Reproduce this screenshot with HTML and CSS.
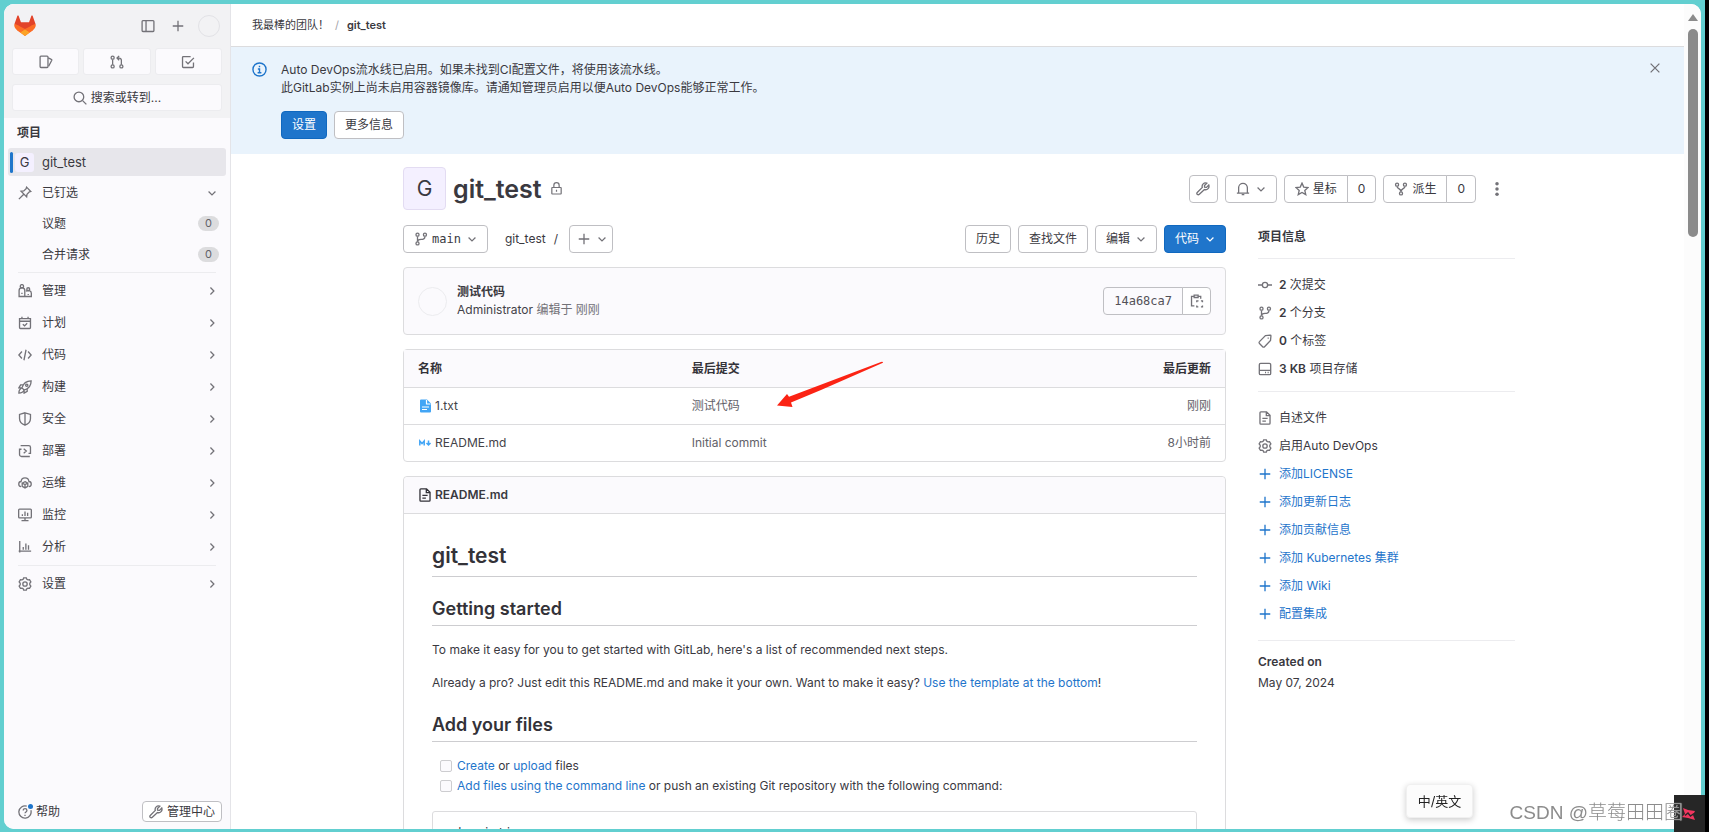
FILE: index.html
```html
<!DOCTYPE html>
<html lang="zh-CN">
<head>
<meta charset="utf-8">
<title>git_test</title>
<link rel="stylesheet" href="styles.css">
</head>
<body>
<svg class="sprite" aria-hidden="true">
  <symbol id="panel" viewBox="0 0 16 16"><rect x="1.25" y="1.75" width="13.5" height="12.5" rx="1"/><path d="M5.75 2v12"/></symbol>
  <symbol id="plus" viewBox="0 0 16 16"><path d="M8 2v12M2 8h12"/></symbol>
  <symbol id="issues" viewBox="0 0 16 16"><rect x="1.25" y="1.25" width="9" height="13" rx="1"/><path d="M10.5 3.2l3.6 1.7c.5.2.7.7.5 1.2L11 12.8"/></symbol>
  <symbol id="merge" viewBox="0 0 16 16"><circle cx="3" cy="3" r="1.75"/><circle cx="3" cy="13" r="1.75"/><circle cx="13" cy="13" r="1.75"/><path d="M3 5v6M13 11V6a2.500 2.500 0 0 0-2.500-2.500H8.500M10.500 1l-2.500 2.500 2.500 2.500"/></symbol>
  <symbol id="todo" viewBox="0 0 16 16"><path d="M11 1.750H2.750a1 1 0 0 0-1 1v10.500a1 1 0 0 0 1 1h10.500a1 1 0 0 0 1-1V8.500M5.250 7.250L8 10l6.750-6.750"/></symbol>
  <symbol id="search" viewBox="0 0 16 16"><circle cx="6.750" cy="6.750" r="5.500"/><path d="M11 11l4.250 4.250"/></symbol>
  <symbol id="pin" viewBox="0 0 16 16"><path d="M9.800 1.300l4.900 4.900-1.700.500-2.700 2.700-.400 3.100L3.500 6.100l3.100-.400 2.700-2.700zM6.300 9.700L1 15"/></symbol>
  <symbol id="down" viewBox="0 0 16 16"><path d="M2.500 5.500L8 11l5.500-5.500"/></symbol>
  <symbol id="right" viewBox="0 0 16 16"><path d="M5.500 2.500L11 8l-5.500 5.500"/></symbol>
  <symbol id="users" viewBox="0 0 16 16"><circle cx="4.500" cy="2.600" r="1.900"/><circle cx="11.700" cy="6" r="1.700"/><path d="M1.250 14.250V7.500a3.250 3.250 0 0 1 6.500 0v6.750zM4.500 10v1.500M8 14.250h7.250V10.500c0-3.400-4.500-3.800-6-2M11.700 11.500v1"/></symbol>
  <symbol id="plan" viewBox="0 0 16 16"><path d="M1.750 3h12.500v10.250a1 1 0 0 1-1 1H2.750a1 1 0 0 1-1-1zM1.750 6h12.500M4.500.750V3M11.500.750V3M5.500 9.500l2 1.750 3-3"/></symbol>
  <symbol id="code" viewBox="0 0 16 16"><path d="M4.500 4L1 8l3.500 4M11.500 4L15 8l-3.500 4M9.200 2L6.800 14"/></symbol>
  <symbol id="rocket" viewBox="0 0 16 16"><path d="M4.500 9C6 4 9.500 1 15 1c0 5.500-3 9-8 10.500zM6 5.500H3L1 9l3.500 0M10.500 10v3L7 15v-3.500M4.500 9C2 10 1 12 1 15c3 0 5-1 6-3.500"/><circle cx="10" cy="6" r="1.300"/></symbol>
  <symbol id="shield" viewBox="0 0 16 16"><path d="M8 .900l6.250 1.850v4.750c0 3.700-2.500 6.300-6.250 7.600-3.750-1.300-6.250-3.900-6.250-7.600V2.750zM8 1v14"/></symbol>
  <symbol id="deploy" viewBox="0 0 16 16"><path d="M3 1.750h9.250a2 2 0 0 1 2 2V11M13.500 14.250H4a2.250 2.250 0 0 1-2.250-2.250V6M1 6h3M12 10.750h3M6.500 5.500L9.500 8l-3 2.500"/></symbol>
  <symbol id="ops" viewBox="0 0 16 16"><path d="M3.500 12.250C-.2 11.500.2 6.500 3.500 6.300 4 .7 12 .7 12.500 6.300c3.300.2 3.700 5.200 0 5.950M8 6.500l3.200 1.600v3.800L8 13.600l-3.200-1.700V8.100zM4.800 8.200L8 9.800l3.200-1.600M8 9.800v3.800"/></symbol>
  <symbol id="monitor" viewBox="0 0 16 16"><rect x=".750" y="1.250" width="14.500" height="10" rx="1"/><path d="M8 11.500v2.500M4 14.500h8M5 7v2M8 4v5M11 5.500V9"/></symbol>
  <symbol id="chart" viewBox="0 0 16 16"><path d="M2 1v13.250M.750 12.750H15M6 8v3M9 4v7M12 6v5"/></symbol>
  <symbol id="gear" viewBox="0 0 16 16"><path d="M6.500.900h3l.6 1.700 1.300.700 1.800-.300 1.500 2.600L13.500 7v2l1.200 1.400-1.500 2.600-1.800-.300-1.300.700-.6 1.700h-3l-.6-1.700-1.300-.700-1.800.300-1.500-2.600L2.500 9V7L1.300 5.600 2.800 3l1.800.300 1.300-.700z"/><circle cx="8" cy="8" r="2.500"/></symbol>
  <symbol id="help" viewBox="0 0 16 16"><path d="M10 1.300A7 7 0 1 0 14.700 6M6 6.200c0-2.700 4.200-2.600 4.200 0C10.200 7.800 8 8 8 9.500M8 11v1.500"/></symbol>
  <symbol id="wrench" viewBox="0 0 16 16"><path d="M12.300 1.400C9.200.200 6.200 3 7.200 6.200L1.400 12a1.500 1.500 0 0 0 0 2 1.700 1.700 0 0 0 2.400 0l5.900-5.400c3.300 1 6-2 4.900-5.100L12 6.200 9.800 5.900 9.700 4z"/></symbol>
  <symbol id="info" viewBox="0 0 16 16"><circle cx="8" cy="8" r="7"/><path d="M8 4v1.500M6.250 7.500H8V11.500M6 11.500h4"/></symbol>
  <symbol id="close" viewBox="0 0 16 16"><path d="M3 3l10 10M13 3L3 13"/></symbol>
  <symbol id="lock" viewBox="0 0 16 16"><rect x="2.250" y="6.750" width="11.500" height="8" rx=".500"/><path d="M4.750 6.500V4a3.250 3.250 0 0 1 6.500 0v2.500M8 9.500v2.500"/></symbol>
  <symbol id="bell" viewBox="0 0 16 16"><path d="M1 12.750h14M3 12.500V6.500a5 5 0 0 1 10 0v6M6.500 14.500h3"/></symbol>
  <symbol id="star" viewBox="0 0 16 16"><path d="M8 1.300l2 4.500 4.900.500-3.700 3.300 1.100 4.800L8 11.900l-4.300 2.500 1.100-4.800L1.100 6.300 6 5.800z"/></symbol>
  <symbol id="fork" viewBox="0 0 16 16"><circle cx="3.500" cy="3" r="1.750"/><circle cx="12.500" cy="3" r="1.750"/><circle cx="8" cy="13" r="1.750"/><path d="M3.500 5c0 3 4.500 2 4.500 6M12.500 5c0 3-4.500 2-4.500 6"/></symbol>
  <symbol id="branch" viewBox="0 0 16 16"><circle cx="4" cy="3" r="1.750"/><circle cx="12.500" cy="3" r="1.750"/><circle cx="4" cy="13" r="1.750"/><path d="M4 5v6M12.500 5c0 3-2 3.500-4.500 3.500-2.500 0-4 .500-4 2.500"/></symbol>
  <symbol id="commit" viewBox="0 0 16 16"><circle cx="8" cy="8" r="3"/><path d="M0 8h5M11 8h5"/></symbol>
  <symbol id="tag" viewBox="0 0 16 16"><path d="M8.500 1.800L14 1.300c.500 0 .800.300.800.800l-.500 5.400-6.800 7a1.500 1.500 0 0 1-2.200 0l-3.600-3.600a1.500 1.500 0 0 1 0-2.200z"/><path d="M11 4.800h1.300"/></symbol>
  <symbol id="disk" viewBox="0 0 16 16"><rect x="1.500" y="1.500" width="13" height="13" rx="1.500"/><path d="M1.500 9.500h13M8 12h1.200M11 12h1.200"/></symbol>
  <symbol id="doc" viewBox="0 0 16 16"><path d="M3.250 1h6.500l4 4v9a1 1 0 0 1-1 1h-9.500a1 1 0 0 1-1-1V2a1 1 0 0 1 1-1zM9.500 1v4.250h4M5 8.500h6M5 11.500h4"/></symbol>
  <symbol id="copy" viewBox="0 0 16 16"><path d="M5 13.500H1.750V2.750H4.500M9.500 2.750h2.750V5.500M4.750 1.250h4.500V4h-4.500zM7.750 9.500V7.750h2M12.500 7.750h1.750V9.500M14.250 13v1.750H12.500M9.500 14.750H7.750V13"/></symbol>
</svg>

<div class="window">
  <aside class="side">
    <div class="side-top">
      <div class="brand">
        <svg class="logo" viewBox="0 0 24 23" role="img" aria-label="GitLab"><path fill="#e24329" d="M3.700.4c.3-.6 1.200-.6 1.400.1L7.600 7.500h8.800L18.900.5c.2-.7 1.100-.7 1.400-.1l3.200 8.800L12 22.500.5 9.200z"/><path fill="#fc6d26" d="M.5 9.200c2.500.4 4.300 1.500 5.600 2.500L12 22.500l-8.800-6.600C1 14.200-.3 11.800.5 9.200zM23.500 9.200c-2.500.4-4.300 1.500-5.600 2.500L12 22.500l8.800-6.600c2.200-1.700 3.500-4.100 2.700-6.700z"/><path fill="#fca326" d="M6.800 18.600L12 14.700l5.200 3.900L12 22.500z"/><path fill="#fc6d26" d="M3 15.800l3.100-4.100L12 14.700l5.900-3 3.100 4.100-3.800 2.800L12 14.700l-5.200 3.900z"/></svg>
        <button class="bare" aria-label="侧边栏"><svg class="icon"><use href="#panel"/></svg></button>
        <button class="bare" aria-label="新建"><svg class="icon"><use href="#plus"/></svg></button>
        <button class="me" aria-label="用户"></button>
      </div>
      <div class="counts">
        <button class="tile" aria-label="议题"><svg class="icon"><use href="#issues"/></svg></button>
        <button class="tile" aria-label="合并请求"><svg class="icon"><use href="#merge"/></svg></button>
        <button class="tile" aria-label="待办"><svg class="icon"><use href="#todo"/></svg></button>
      </div>
      <button class="tile"><svg class="icon"><use href="#search"/></svg>搜索或转到...</button>
    </div>
    <nav class="nav">
      <h2 class="nav-title">项目</h2>
      <a class="item current" href="#"><span class="letter">G</span><span>git_test</span></a>
      <a class="item pinned" href="#"><svg class="icon"><use href="#pin"/></svg><span>已钉选</span><svg class="chev"><use href="#down"/></svg></a>
      <a class="item sub" href="#"><span>议题</span><span class="badge">0</span></a>
      <a class="item sub" href="#"><span>合并请求</span><span class="badge">0</span></a>
      <div class="group">
        <a class="item" href="#"><svg class="icon"><use href="#users"/></svg><span>管理</span><svg class="chev"><use href="#right"/></svg></a>
        <a class="item" href="#"><svg class="icon"><use href="#plan"/></svg><span>计划</span><svg class="chev"><use href="#right"/></svg></a>
        <a class="item" href="#"><svg class="icon"><use href="#code"/></svg><span>代码</span><svg class="chev"><use href="#right"/></svg></a>
        <a class="item" href="#"><svg class="icon"><use href="#rocket"/></svg><span>构建</span><svg class="chev"><use href="#right"/></svg></a>
        <a class="item" href="#"><svg class="icon"><use href="#shield"/></svg><span>安全</span><svg class="chev"><use href="#right"/></svg></a>
        <a class="item" href="#"><svg class="icon"><use href="#deploy"/></svg><span>部署</span><svg class="chev"><use href="#right"/></svg></a>
        <a class="item" href="#"><svg class="icon"><use href="#ops"/></svg><span>运维</span><svg class="chev"><use href="#right"/></svg></a>
        <a class="item" href="#"><svg class="icon"><use href="#monitor"/></svg><span>监控</span><svg class="chev"><use href="#right"/></svg></a>
        <a class="item" href="#"><svg class="icon"><use href="#chart"/></svg><span>分析</span><svg class="chev"><use href="#right"/></svg></a>
      </div>
      <div class="group">
        <a class="item" href="#"><svg class="icon"><use href="#gear"/></svg><span>设置</span><svg class="chev"><use href="#right"/></svg></a>
      </div>
    </nav>
    <div class="side-foot">
      <button class="help"><svg class="icon"><use href="#help"/></svg>帮助<span class="dot"></span></button>
      <button class="btn small"><svg class="icon"><use href="#wrench"/></svg>管理中心</button>
    </div>
  </aside>

  <main class="main">
    <nav class="crumbs"><a href="#">我最棒的团队！</a><span class="sep">/</span><a class="here" href="#">git_test</a></nav>
    <section class="banner">
      <svg class="icon info"><use href="#info"/></svg>
      <div class="banner-text">
        <p>Auto DevOps流水线已启用。如果未找到CI配置文件，将使用该流水线。</p>
        <p>此GitLab实例上尚未启用容器镜像库。请通知管理员启用以便Auto DevOps能够正常工作。</p>
        <div class="actions"><button class="btn primary">设置</button><button class="btn">更多信息</button></div>
      </div>
      <button class="bare close" aria-label="关闭"><svg class="icon"><use href="#close"/></svg></button>
    </section>

    <div class="content">
      <header class="project">
        <span class="avatar">G</span>
        <h1>git_test</h1>
        <svg class="icon"><use href="#lock"/></svg>
        <div class="tools">
          <button class="btn square" aria-label="管理"><svg class="icon"><use href="#wrench"/></svg></button>
          <button class="btn" aria-label="通知"><svg class="icon"><use href="#bell"/></svg><svg class="chev"><use href="#down"/></svg></button>
          <div class="pair"><button class="btn"><svg class="icon"><use href="#star"/></svg>星标</button><a class="btn" href="#">0</a></div>
          <div class="pair"><button class="btn"><svg class="icon"><use href="#fork"/></svg>派生</button><a class="btn" href="#">0</a></div>
          <button class="bare more" aria-label="更多"><svg class="dots" viewBox="0 0 16 16"><circle cx="8" cy="2" r="2"/><circle cx="8" cy="8" r="2"/><circle cx="8" cy="14" r="2"/></svg></button>
        </div>
      </header>

      <div class="columns">
        <div class="files">
          <div class="bar">
            <button class="btn mono"><svg class="icon"><use href="#branch"/></svg>main<svg class="chev"><use href="#down"/></svg></button>
            <span class="path"><a href="#">git_test</a><span>/</span></span>
            <button class="btn add" aria-label="添加"><svg class="icon"><use href="#plus"/></svg><svg class="chev"><use href="#down"/></svg></button>
            <div class="actions right">
              <button class="btn">历史</button><button class="btn">查找文件</button>
              <button class="btn">编辑<svg class="chev"><use href="#down"/></svg></button>
              <button class="btn primary">代码<svg class="chev"><use href="#down"/></svg></button>
            </div>
          </div>

          <section class="card commit">
            <span class="face"></span>
            <div><a class="msg" href="#">测试代码</a><p class="by"><a href="#">Administrator</a> 编辑于 刚刚</p></div>
            <div class="pair sha"><span class="btn mono">14a68ca7</span><button class="btn" aria-label="复制"><svg class="icon"><use href="#copy"/></svg></button></div>
          </section>

          <div class="card listing">
            <table class="tree">
              <thead><tr><th>名称</th><th>最后提交</th><th>最后更新</th></tr></thead>
              <tbody>
                <tr><td><a href="#"><svg class="ftype" viewBox="0 0 14 14"><path fill="#42a5f5" d="M3 .5h6L13 4.500v8a1 1 0 0 1-1 1H3a1 1 0 0 1-1-1v-11a1 1 0 0 1 1-1z"/><path fill="none" stroke="#fff" stroke-width="1.200" d="M8.500 1v4h4M4 8h7M4 10.500h5"/></svg>1.txt</a></td><td>测试代码</td><td>刚刚</td></tr>
                <tr><td><a href="#"><svg class="ftype" viewBox="0 0 14 14"><path fill="none" stroke="#42a5f5" stroke-width="1.500" d="M1.800 9.500V5l2.200 2.500L6.200 5v4.500M10.500 4.500v4M8.500 7l2 2 2-2"/></svg>README.md</a></td><td>Initial commit</td><td>8小时前</td></tr>
              </tbody>
            </table>
            <svg class="pointer" viewBox="0 0 107 47"><path fill="#fb2314" d="M1 44.500L11 33l2 2.800L105 1q2-.5 2 .7L45 29 15 41.500l1.500 4.500z"/></svg>
          </div>

          <article class="card readme">
            <header><svg class="icon"><use href="#doc"/></svg><a href="#">README.md</a></header>
            <div class="prose" lang="en">
              <h1>git_test</h1>
              <h2>Getting started</h2>
              <p>To make it easy for you to get started with GitLab, here's a list of recommended next steps.</p>
              <p>Already a pro? Just edit this README.md and make it your own. Want to make it easy? <a href="#">Use the template at the bottom</a>!</p>
              <h2>Add your files</h2>
              <ul>
                <li><input type="checkbox" id="t1" disabled><label for="t1"><a href="#">Create</a> or <a href="#">upload</a> files</label></li>
                <li><input type="checkbox" id="t2" disabled><label for="t2"><a href="#">Add files using the command line</a> or push an existing Git repository with the following command:</label></li>
              </ul>
              <pre>cd existing_repo</pre>
            </div>
          </article>
        </div>

        <aside class="about">
          <h2>项目信息</h2>
          <ul>
            <li><a href="#"><svg class="icon"><use href="#commit"/></svg><span><b>2</b> 次提交</span></a></li>
            <li><a href="#"><svg class="icon"><use href="#branch"/></svg><span><b>2</b> 个分支</span></a></li>
            <li><a href="#"><svg class="icon"><use href="#tag"/></svg><span><b>0</b> 个标签</span></a></li>
            <li><a href="#"><svg class="icon"><use href="#disk"/></svg><span><b>3 KB</b> 项目存储</span></a></li>
          </ul>
          <ul class="setup">
            <li><a href="#"><svg class="icon"><use href="#doc"/></svg>自述文件</a></li>
            <li><a href="#"><svg class="icon"><use href="#gear"/></svg>启用Auto DevOps</a></li>
            <li><a class="blue" href="#"><svg class="icon"><use href="#plus"/></svg>添加LICENSE</a></li>
            <li><a class="blue" href="#"><svg class="icon"><use href="#plus"/></svg>添加更新日志</a></li>
            <li><a class="blue" href="#"><svg class="icon"><use href="#plus"/></svg>添加贡献信息</a></li>
            <li><a class="blue" href="#"><svg class="icon"><use href="#plus"/></svg>添加 Kubernetes 集群</a></li>
            <li><a class="blue" href="#"><svg class="icon"><use href="#plus"/></svg>添加 Wiki</a></li>
            <li><a class="blue" href="#"><svg class="icon"><use href="#plus"/></svg>配置集成</a></li>
          </ul>
          <div class="created"><b>Created on</b><span>May 07, 2024</span></div>
        </aside>
      </div>
    </div>
  </main>
  <div class="scroll" aria-hidden="true"><span class="up"></span><span class="thumb"></span></div>
</div>

<button class="ime">中/英文</button>
<div class="corner"><svg viewBox="0 0 14 14"><path fill="#f0365f" d="M1 1l5 2 7 1-2 4 2 5-7-2-6-1 3-3z"/><path stroke="#262626" stroke-width="1.400" d="M3 8.500l3-2.500 2.500 3L12 6.500" fill="none"/></svg></div>
<div class="mark">CSDN @草莓田田圈</div>
</body>
</html>
```
FILE: styles.css
```css
* { box-sizing: border-box; }
html { background: #000; }
body {
  margin: 0 4px 0 0;
  height: 100vh;
  padding: 4px 4px 3px;
  overflow: hidden;
  background: #62cfd0;
  color: #3a393f;
  font: 12px/18px Inter, "Noto Sans CJK SC", sans-serif;
}
h1, h2, p, ul, pre { margin: 0; padding: 0; }
ul { list-style: none; }
a { color: inherit; text-decoration: none; }
button { font: inherit; color: inherit; cursor: pointer; }
.sprite { position: absolute; width: 0; height: 0; }
.icon, .chev { flex: none; width: 14px; height: 14px; fill: none; stroke: #737278; stroke-width: 1.5; }
.chev { width: 10px; height: 10px; stroke-width: 2; }
.window { display: flex; height: 100%; overflow: hidden; background: #fff; border-radius: 10px; }
.bare { display: flex; padding: 0; border: 0; background: none; }

/* sidebar */
.side { flex: none; display: flex; flex-direction: column; width: 227px; background: #fbfafd; border-right: 1px solid #e4e4e8; }
.side-top { display: flex; flex-direction: column; gap: 9px; padding: 11px 8px 7px; background: #f2f2f4; }
.brand { display: flex; align-items: center; gap: 16px; padding: 0 2px 2px; }
.logo { width: 22px; height: 22px; margin-right: auto; }
.me { width: 22px; height: 22px; margin-left: -3px; border: 1px solid #e2e2e6; border-radius: 50%; background: none; }
.counts { display: flex; gap: 4px; }
.counts .tile { flex: 1; }
.tile { display: flex; align-items: center; justify-content: center; gap: 4px; height: 27px; padding: 0; border: 1px solid #ececef; border-radius: 3px; background: #fbfafd; }
.nav { flex: 1; padding: 6px 4px 0; }
.nav-title { padding: 0 9px; margin-bottom: 6px; font-size: 12px; line-height: 18px; font-weight: 600; }
.item { display: flex; align-items: center; gap: 10px; height: 32px; padding: 0 9px 0 10px; }
.item .chev, .badge { margin-left: auto; }
.current { height: 28px; margin-bottom: 2px; padding-left: 2px; gap: 8px; border-radius: 3px; background: #e7e6eb; font-size: 13px; }
.current::before { content: ""; width: 3px; height: 21px; margin-right: -6px; border-radius: 2px; background: #1f75cb; }
.letter { width: 19px; height: 19px; border-radius: 3px; background: #f4f0ff; text-align: center; font-size: 13px; line-height: 19px; }
.pinned { height: 30px; }
.sub { height: 31px; padding: 0 7px 0 34px; }
.badge { width: 21px; height: 15px; border-radius: 8px; background: #dcdcde; color: #626168; font-size: 11px; line-height: 15px; text-align: center; }
.group { margin-top: 2px; }
.group::before { content: ""; display: block; height: 1px; margin: 0 10px 2px; background: #ececef; }
.side-foot { display: flex; justify-content: space-between; align-items: center; padding: 0 8px 7px 14px; }
.help { position: relative; display: flex; align-items: center; gap: 4px; padding: 0; border: 0; background: none; }
.dot { position: absolute; left: 10px; top: 1px; width: 5px; height: 5px; border-radius: 50%; background: #1f75cb; }

/* buttons */
.btn { display: inline-flex; align-items: center; justify-content: center; gap: 4px; height: 28px; padding: 0 10px; border: 1px solid #bfbfc3; border-radius: 4px; background: #fff; white-space: nowrap; }
.btn .chev { margin-left: 2px; }
.primary { background: #1f75cb; border-color: #1068bf; color: #fff; }
.primary .chev { stroke: #fff; }
.square { width: 29px; padding: 0; }
.small { height: 21px; padding: 0 6px; }
.pair { display: flex; }
.pair .btn:first-child { border-radius: 4px 0 0 4px; }
.pair .btn:last-child { margin-left: -1px; border-radius: 0 4px 4px 0; }
.mono { font-family: "DejaVu Sans Mono", monospace; }
.actions { display: flex; gap: 7px; }

/* page head */
.main { flex: 1; min-width: 0; overflow: hidden; }
.crumbs { display: flex; align-items: center; height: 43px; padding: 0 21px; border-bottom: 1px solid #dcdcde; font-size: 11px; }
.sep { margin: 0 8px 0 6px; color: #a4a3a8; }
.here { font-weight: 600; }
.banner { display: flex; padding: 14px 22px 15px 21px; background: #e9f3fc; }
.info { width: 15px; height: 15px; margin: 1px 14px 0 0; stroke: #1f75cb; }
.banner-text { flex: 1; }
.banner-text .actions { margin-top: 14px; }
.close { align-self: flex-start; }

/* project */
.content { padding: 13px 169px 0 172px; }
.project { display: flex; align-items: center; }
.avatar { width: 43px; height: 43px; border: 1px solid #e3dcf2; border-radius: 4px; background: #f4f0ff; font-size: 21px; line-height: 41px; text-align: center; }
.project h1 { margin: 0 8px 0 7px; font-size: 25px; line-height: 32px; font-weight: 600; }
.project h1 + .icon { width: 13px; height: 13px; }
.tools { display: flex; gap: 7px; margin-left: auto; }
.more { align-items: center; width: 32px; padding-right: 4px; justify-content: center; }
.dots { width: 14px; height: 14px; fill: #737278; }
.columns { display: grid; grid-template-columns: minmax(0, 1fr) 257px; gap: 32px; margin-top: 14px; }
.files { display: flex; flex-direction: column; gap: 14px; }
.bar { display: flex; align-items: center; height: 29px; }
.path { display: flex; gap: 8px; margin: 0 11px 0 17px; }
.add { padding: 0 5px 0 7px; }
.right { margin-left: auto; }
.card { border: 1px solid #dcdcde; border-radius: 4px; }
.commit { display: flex; align-items: center; gap: 10px; height: 68px; padding: 0 14px; background: #fbfafd; }
.face { width: 29px; height: 29px; border: 1px solid #ececef; border-radius: 50%; }
.msg, .readme header a { font-weight: 600; }
.by { color: #737278; }
.by a { color: #434248; }
.sha { margin-left: auto; }
.sha .btn:first-child { background: #fbfafd; color: #535158; }
.sha .btn:last-child { width: 29px; padding: 0; }
.listing { position: relative; }
.tree { width: 100%; border-collapse: collapse; table-layout: fixed; }
.tree th, .tree td { height: 37px; padding: 1px 14px 0; text-align: left; color: #626168; }
.tree th { background: #fbfafd; color: #333238; font-weight: 600; }
.tree td { border-top: 1px solid #dcdcde; }
.tree th:last-child, .tree td:last-child { text-align: right; }
.tree a { display: flex; align-items: center; gap: 3px; color: #434248; }
.ftype { width: 14px; height: 14px; }
.pointer { position: absolute; left: 45.3%; top: 11px; width: 107px; height: 47px; }
.readme header { display: flex; align-items: center; gap: 3px; height: 37px; padding: 0 14px; border-bottom: 1px solid #dcdcde; background: #fbfafd; border-radius: 4px 4px 0 0; }
.readme header .icon { stroke: #333238; }
.prose { padding: 28px; font-size: 12px; line-height: 20px; }
.prose h1, .prose h2 { border-bottom: 1px solid #cdcdd0; font-weight: 600; color: #333238; }
.prose h1 { padding-bottom: 6px; margin-bottom: 20px; font-size: 21px; line-height: 28px; }
.prose h2 { padding-bottom: 4px; margin-bottom: 14px; font-size: 18px; line-height: 24px; }
.prose p { margin-bottom: 13px; }
.prose p + h2 { margin-top: 20px; }
.prose a, .blue { color: #1f75cb; }
.prose li { display: flex; align-items: center; padding-left: 8px; }
.prose input { appearance: none; width: 12px; height: 12px; margin: 0 5px 0 0; border: 1px solid #cdcdd0; border-radius: 2px; background: #fbfafd; }
.prose pre { margin-top: 15px; padding: 12px 14px; border: 1px solid #dcdcde; border-radius: 3px; font: 12px/18px "DejaVu Sans Mono", monospace; }

/* project information */
.about h2 { padding: 4px 0 12px; font-size: 12px; line-height: 18px; font-weight: 600; }
.about ul { display: flex; flex-direction: column; gap: 10px; padding: 17px 0 13px; border-top: 1px solid #ececef; }
.about .setup { padding-bottom: 17px; }
.about li a { display: flex; align-items: center; gap: 7px; }
.about .blue .icon { stroke: #1f75cb; }
.about b { font-weight: 600; }
.created { display: flex; flex-direction: column; gap: 3px; padding-top: 12px; border-top: 1px solid #ececef; }

/* scrollbar */
.scroll { flex: none; display: flex; flex-direction: column; align-items: center; gap: 8px; width: 17px; padding-top: 10px; background: #fcfcfc; }
.up { border: 5px solid transparent; border-top: 0; border-bottom: 7px solid #8b8b8b; }
.thumb { width: 10px; height: 208px; border-radius: 5px; background: #8b8b8b; }

/* overlays */
.ime { position: fixed; right: 236px; bottom: 14px; width: 67px; height: 34px; padding: 0; border: 1px solid #f0f0f0; border-radius: 4px; background: #fcfcfc; box-shadow: 0 2px 6px #00000033; font-size: 13px; color: #222; }
.corner { position: fixed; right: 4px; bottom: 0; width: 31px; height: 37px; padding: 12px 8px; background: #262626; }
.corner svg { display: block; width: 14px; height: 14px; }
.mark { position: fixed; right: 26px; bottom: 7px; color: #8c8c8c; font: 300 19px/24px "Liberation Sans", "Noto Sans CJK SC", sans-serif; text-shadow: 0 0 1px #fff; white-space: nowrap; }
```
